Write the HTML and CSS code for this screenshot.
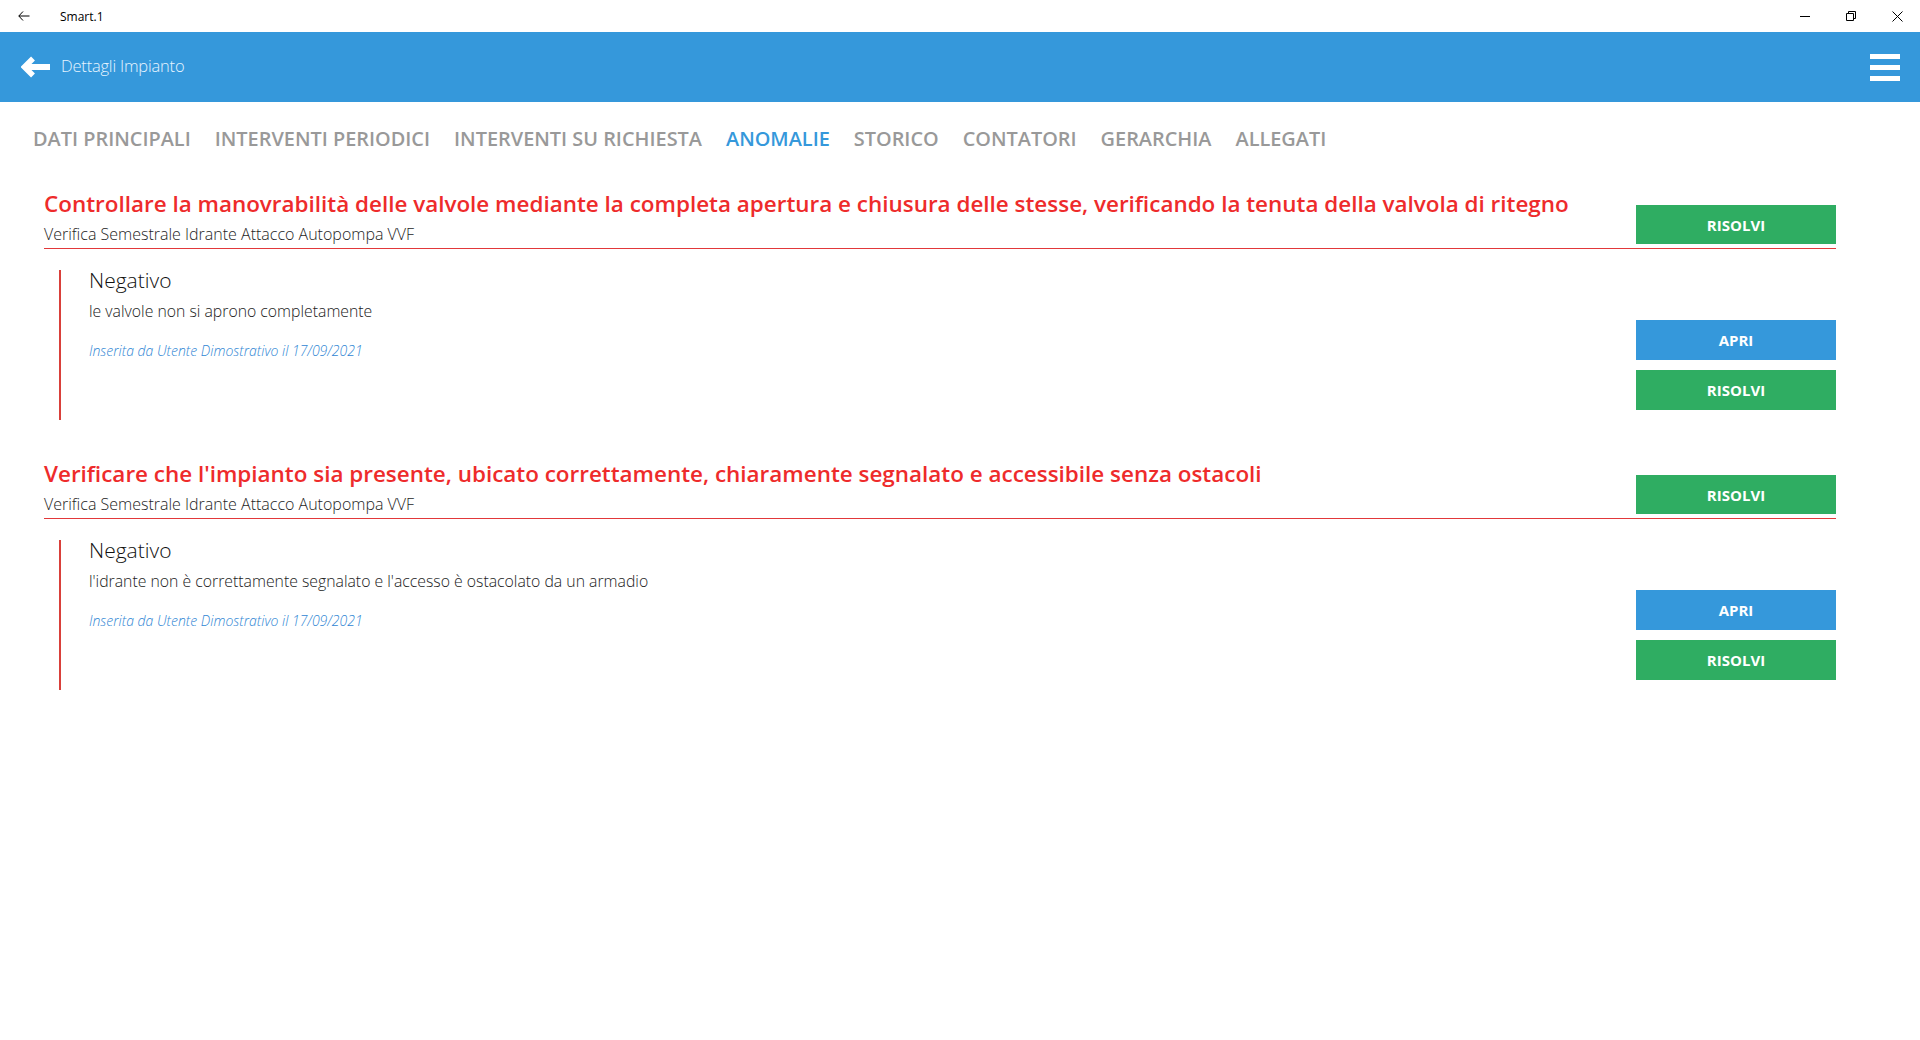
FILE: index.html
```html
<!DOCTYPE html>
<html lang="it">
<head>
<meta charset="utf-8">
<title>Smart.1</title>
<link rel="stylesheet" href="styles.css">
</head>
<body>
<div class="titlebar">
  <div class="tb-left">
    <svg class="tb-back" width="12" height="10" viewBox="0 0 12 10"><path d="M5 0.5 L0.8 5 L5 9.5 M0.8 5 H11.5" fill="none" stroke="#000" stroke-width="1"/></svg>
    <span class="tb-title">Smart.1</span>
  </div>
  <div class="tb-controls">
    <span class="tb-btn"><svg width="10" height="10" viewBox="0 0 10 10"><path d="M0 5.5 H10" stroke="#000" stroke-width="1"/></svg></span>
    <span class="tb-btn"><svg width="10" height="10" viewBox="0 0 10 10"><path d="M0.5 2.5 H7.5 V9.5 H0.5 Z M2.5 2.5 V0.5 H9.5 V7.5 H7.5" fill="none" stroke="#000" stroke-width="1"/></svg></span>
    <span class="tb-btn"><svg width="11" height="11" viewBox="0 0 11 11"><path d="M0.5 0.5 L10.5 10.5 M10.5 0.5 L0.5 10.5" stroke="#000" stroke-width="1"/></svg></span>
  </div>
</div>

<header class="appbar">
  <div class="appbar-left">
    <svg class="back-arrow" width="30" height="22" viewBox="0 0 30 22"><path d="M12 2.5 L3.5 11 L12 19.5" fill="none" stroke="#fff" stroke-width="5.5" stroke-linejoin="miter"/><path d="M5 11 H29" stroke="#fff" stroke-width="6"/></svg>
    <span class="appbar-title">Dettagli Impianto</span>
  </div>
  <div class="hamburger"><span></span><span></span><span></span></div>
</header>

<nav class="tabs">
  <span class="tab">DATI PRINCIPALI</span>
  <span class="tab">INTERVENTI PERIODICI</span>
  <span class="tab">INTERVENTI SU RICHIESTA</span>
  <span class="tab active">ANOMALIE</span>
  <span class="tab">STORICO</span>
  <span class="tab">CONTATORI</span>
  <span class="tab">GERARCHIA</span>
  <span class="tab">ALLEGATI</span>
</nav>

<main class="content">
  <section class="anomaly">
    <div class="anomaly-head">
      <div class="anomaly-text">
        <div class="anomaly-title">Controllare la manovrabilità delle valvole mediante la completa apertura e chiusura delle stesse, verificando la tenuta della valvola di ritegno</div>
        <div class="anomaly-sub">Verifica Semestrale Idrante Attacco Autopompa VVF</div>
      </div>
      <button class="btn btn-green head-btn">RISOLVI</button>
    </div>
    <div class="note">
      <div class="note-body">
        <div class="note-title">Negativo</div>
        <div class="note-desc">le valvole non si aprono completamente</div>
        <div class="note-meta">Inserita da Utente Dimostrativo il 17/09/2021</div>
      </div>
      <div class="note-actions">
        <button class="btn btn-blue">APRI</button>
        <button class="btn btn-green">RISOLVI</button>
      </div>
    </div>
  </section>

  <section class="anomaly">
    <div class="anomaly-head">
      <div class="anomaly-text">
        <div class="anomaly-title">Verificare che l'impianto sia presente, ubicato correttamente, chiaramente segnalato e accessibile senza ostacoli</div>
        <div class="anomaly-sub">Verifica Semestrale Idrante Attacco Autopompa VVF</div>
      </div>
      <button class="btn btn-green head-btn">RISOLVI</button>
    </div>
    <div class="note">
      <div class="note-body">
        <div class="note-title">Negativo</div>
        <div class="note-desc">l'idrante non è correttamente segnalato e l'accesso è ostacolato da un armadio</div>
        <div class="note-meta">Inserita da Utente Dimostrativo il 17/09/2021</div>
      </div>
      <div class="note-actions">
        <button class="btn btn-blue">APRI</button>
        <button class="btn btn-green">RISOLVI</button>
      </div>
    </div>
  </section>
</main>
</body>
</html>
```

FILE: styles.css
```css
* { box-sizing: border-box; }

html, body {
  margin: 0;
  padding: 0;
  background: #ffffff;
  font-family: "Open Sans", "Noto Sans", "Liberation Sans", sans-serif;
  color: #222;
}

.titlebar {
  height: 32px;
  display: flex;
  align-items: center;
  justify-content: space-between;
  background: #fff;
}

.tb-left {
  display: flex;
  align-items: center;
}

.tb-back {
  margin-left: 18px;
}

.tb-title {
  margin-left: 30px;
  font-size: 12px;
  color: #000;
}

.tb-controls {
  display: flex;
  height: 32px;
}

.tb-btn {
  width: 46px;
  display: flex;
  align-items: center;
  justify-content: center;
}

.appbar {
  height: 70px;
  background: #3598db;
  display: flex;
  align-items: center;
  justify-content: space-between;
}

.appbar-left {
  display: flex;
  align-items: center;
}

.back-arrow {
  margin-left: 21px;
}

.appbar-title {
  margin-left: 10px;
  margin-bottom: 4px;
  font-size: 16.5px;
  font-weight: 300;
  color: #e6f4ff;
  letter-spacing: -0.2px;
}

.hamburger {
  width: 30px;
  margin-right: 20px;
  display: flex;
  flex-direction: column;
  gap: 6px;
}

.hamburger span {
  display: block;
  height: 5px;
  background: #fff;
}

.tabs {
  display: flex;
  gap: 24px;
  padding: 24px 0 0 33px;
  height: 86px;
}

.tab {
  font-size: 19.9px;
  font-weight: 600;
  color: #999999;
  line-height: 26px;
  height: 26px;
}

.tab.active {
  color: #3598db;
}

.content {
  padding: 0 84px 0 44px;
}

.anomaly {
  margin-bottom: 38px;
}

.anomaly-head {
  display: flex;
  align-items: flex-end;
  justify-content: space-between;
  border-bottom: 1px solid #e2383a;
  padding-bottom: 2px;
}

.anomaly-title {
  font-size: 22.45px;
  font-weight: 600;
  color: #ee2b2b;
  line-height: 30px;
  padding-top: 1px;
}

.anomaly-sub {
  margin-top: 3px;
  font-size: 16px;
  font-weight: 300;
  line-height: 24px;
  color: #1e1e1e;
}

.btn {
  border: 0;
  width: 200px;
  height: 40px;
  font-family: "Open Sans", "Noto Sans", sans-serif;
  font-size: 15px;
  font-weight: 700;
  color: #fff;
  padding: 0;
}

.btn-green { background: #2fad62; }
.btn-blue { background: #3598db; }

.head-btn {
  height: 39px;
  margin-bottom: 2px;
  flex-shrink: 0;
}

.note {
  margin: 21px 0 0 15px;
  height: 150px;
  border-left: 2px solid #d9403a;
  display: flex;
  justify-content: space-between;
}

.note-body {
  padding-left: 28px;
}

.note-title {
  font-size: 21px;
  font-weight: 300;
  line-height: 20px;
  color: #111;
}

.note-desc {
  margin-top: 10px;
  font-size: 15.8px;
  font-weight: 300;
  line-height: 22px;
  color: #222;
}

.note-meta {
  margin-top: 19px;
  font-size: 14px;
  font-weight: 300;
  font-style: italic;
  line-height: 20px;
  color: #2f86d4;
}

.note-actions {
  display: flex;
  flex-direction: column;
  justify-content: flex-end;
  gap: 10px;
  padding-bottom: 10px;
}
```
